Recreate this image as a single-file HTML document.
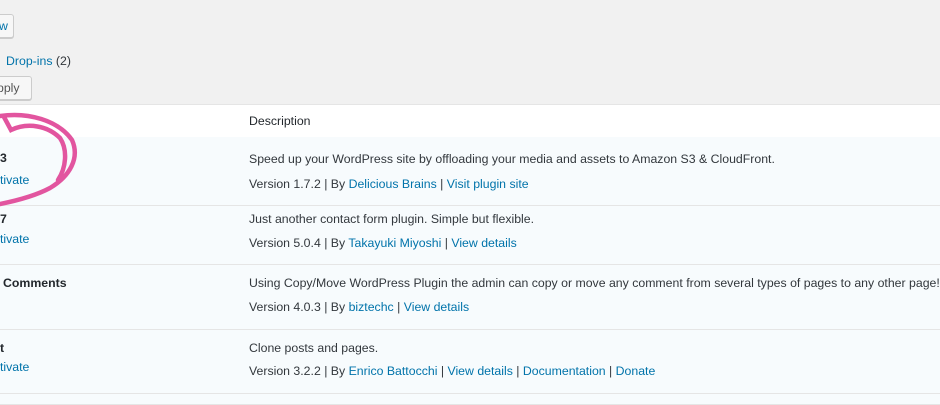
<!DOCTYPE html>
<html><head><style>
body{margin:0;width:940px;height:400px;overflow:hidden;background:#f1f1f1;font-family:"Liberation Sans",Arial,sans-serif;font-size:12.3px;color:#32373c;position:relative}
.a{color:#0073aa}
.abs{position:absolute;white-space:nowrap}
.btn{position:absolute;border:1px solid #ccc;background:#f7f7f7;border-radius:3px;box-shadow:0 1px 0 #ccc;color:#555}
.hdr{position:absolute;left:0;top:104px;width:940px;height:32px;background:#fff;border-top:1px solid #e5e5e5;border-bottom:1px solid #e1e1e1}
.row{position:absolute;left:0;width:940px;background:#f7fbfd;border-bottom:1px solid #e5e5e5}
b{color:#23282d}
</style></head><body>
<div class="btn" style="left:-10px;top:14px;width:22px;height:22px"><span class="abs" style="left:8px;top:4px;color:#0073aa">w</span></div>
<div class="abs" style="left:6px;top:54px"><span class="a">Drop-ins</span> (2)</div>
<div class="btn" style="left:-10px;top:76px;width:40px;height:22px"><span class="abs" style="left:6px;top:4px">pply</span></div>
<div class="hdr"><span class="abs" style="left:249px;top:9px;color:#23282d">Description</span></div>
<div class="row" style="top:137px;height:68px">
<b class="abs" style="left:0;top:14px">3</b><span class="abs a" style="left:0;top:36px">tivate</span>
<span class="abs" style="left:249px;top:15px">Speed up your WordPress site by offloading your media and assets to Amazon S3 &amp; CloudFront.</span>
<span class="abs" style="left:249px;top:40px">Version 1.7.2 | By <span class="a">Delicious Brains</span> | <span class="a">Visit plugin site</span></span></div>
<div class="row" style="top:206px;height:58px">
<b class="abs" style="left:0;top:6px">7</b><span class="abs a" style="left:0;top:26px">tivate</span>
<span class="abs" style="left:249px;top:6px">Just another contact form plugin. Simple but flexible.</span>
<span class="abs" style="left:249px;top:30px">Version 5.0.4 | By <span class="a">Takayuki Miyoshi</span> | <span class="a">View details</span></span></div>
<div class="row" style="top:265px;height:64px">
<b class="abs" style="left:3px;top:11px">Comments</b>
<span class="abs" style="left:249px;top:11px">Using Copy/Move WordPress Plugin the admin can copy or move any comment from several types of pages to any other page!</span>
<span class="abs" style="left:249px;top:35px">Version 4.0.3 | By <span class="a">biztechc</span> | <span class="a">View details</span></span></div>
<div class="row" style="top:330px;height:63px">
<b class="abs" style="left:0;top:11px">t</b><span class="abs a" style="left:0;top:30px">tivate</span>
<span class="abs" style="left:249px;top:11px">Clone posts and pages.</span>
<span class="abs" style="left:249px;top:34px">Version 3.2.2 | By <span class="a">Enrico Battocchi</span> | <span class="a">View details</span> | <span class="a">Documentation</span> | <span class="a">Donate</span></span></div>
<div class="row" style="top:394px;height:10px"></div>
<svg class="abs" style="left:0;top:0;z-index:5" width="120" height="220">
<g fill="none" stroke="#e2559f" stroke-width="4.5" stroke-linecap="round">
<path d="M0 116 C28 112 58 120 72 140 C80 158 70 176 50 188 C35 196 15 201 0 204"/>
<path d="M4 117 L11 130 C28 122 48 126 60 138 C68 150 66 168 58 180"/>
</g></svg>
</body></html>
